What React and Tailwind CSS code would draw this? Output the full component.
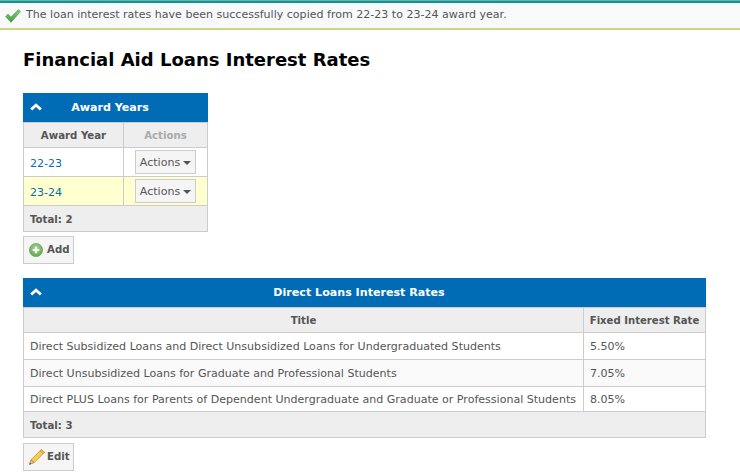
function ChevronUp() {
  return (
    <svg width="12" height="8" viewBox="0 0 12 8" className="block">
      <path d="M6 0.3 L11.8 5.4 L9.8 7.4 L6 4 L2.2 7.4 L0.2 5.4 Z" fill="#fff" />
    </svg>
  );
}

function Check() {
  return (
    <svg width="16" height="14" viewBox="0 0 16 14" className="block">
      <defs>
        <linearGradient id="cg" x1="0" y1="0" x2="0" y2="1">
          <stop offset="0%" stopColor="#8ccc7e" />
          <stop offset="100%" stopColor="#3f9a45" />
        </linearGradient>
      </defs>
      <path d="M0.5 7.5 L3 5 L6 8 L13.4 0.6 L15.6 2.6 L6 13.4 Z" fill="url(#cg)" stroke="#4c9450" strokeWidth="0.5" />
    </svg>
  );
}

function PlusIcon() {
  return (
    <svg width="14" height="14" viewBox="0 0 14 14" className="block">
      <defs>
        <radialGradient id="pg" cx="50%" cy="40%" r="60%">
          <stop offset="0%" stopColor="#b5dca0" />
          <stop offset="100%" stopColor="#5aa84a" />
        </radialGradient>
      </defs>
      <circle cx="7" cy="7" r="6.6" fill="url(#pg)" stroke="#6b9f62" strokeWidth="0.7" />
      <path d="M7 3.8 V10.2 M3.8 7 H10.2" stroke="#fff" strokeWidth="2" />
    </svg>
  );
}

function Pencil() {
  return (
    <svg width="16" height="16" viewBox="0 0 16 16" className="block">
      <path d="M12.4 0.5 L15.5 3.3 L5 13.6 L2 10.8 Z" fill="#f5cf55" stroke="#c88a2a" strokeWidth="0.8" />
      <path d="M12.4 0.5 L15.5 3.3 L14 4.8 L10.9 2 Z" fill="#eeb27a" stroke="#c88a2a" strokeWidth="0.6" />
      <path d="M2 10.8 L5 13.6 L0.4 15.6 Z" fill="#e8c9a0" stroke="#b5793a" strokeWidth="0.8" />
      <path d="M0.4 15.6 L1.1 13.7 L2.3 14.8 Z" fill="#5a4a3a" />
    </svg>
  );
}

function PanelHeader({ title }) {
  return (
    <div className="relative flex h-[29px] items-center justify-center bg-[#006cb5] pr-[11px] pt-[2px]">
      <span className="absolute left-[7px] top-[10px]"><ChevronUp /></span>
      <span className="text-[11.1px] font-bold text-white">{title}</span>
    </div>
  );
}

function ActionsButton() {
  return (
    <div className="flex h-[24px] w-[61px] items-center justify-center gap-[3px] border border-[#ccc] bg-[#f5f5f5] pt-[2px] text-[11.05px] text-[#555]">
      Actions
      <span className="h-0 w-0 border-x-[4px] border-t-[4px] border-x-transparent border-t-[#555]" />
    </div>
  );
}

function IconButton({ icon, label, gap }) {
  return (
    <div className={`flex h-[28px] w-[51px] items-center border border-[#ccc] bg-[#f5f5f5] pl-[5px] text-[10.2px] font-bold text-[#555] ${gap}`}>
      {icon}
      {label}
    </div>
  );
}

const loans = [
  ["Direct Subsidized Loans and Direct Unsubsidized Loans for Undergraduated Students", "5.50%", "h-[27px] bg-white"],
  ["Direct Unsubsidized Loans for Graduate and Professional Students", "7.05%", "h-[27px] bg-[#f9f9f9]"],
  ["Direct PLUS Loans for Parents of Dependent Undergraduate and Graduate or Professional Students", "8.05%", "h-[25px] bg-white"],
];

export default function App() {
  return (
    <div className="min-h-[473px] overflow-hidden bg-white font-['DejaVu_Sans','Liberation_Sans',sans-serif] text-[11.05px] text-[#555]">
      <div className="h-px bg-[#6fb98a]" />
      <div className="flex h-[29px] items-center gap-[5px] border-t-[2px] border-b-[2px] border-t-[#0f8fa8] border-b-[#c9d77e] bg-[#f7f9fb] pl-[5px] text-[#555]">
        <Check />
        <span>The loan interest rates have been successfully copied from 22-23 to 23-24 award year.</span>
      </div>

      <div className="px-[23px]">
        <h1 className="mt-[18px] h-[45px] text-[18px] font-bold leading-[24px] text-black">Financial Aid Loans Interest Rates</h1>

        <div className="w-[185px]">
          <PanelHeader title="Award Years" />
          <table className="w-full table-fixed border-collapse border border-[#ccc]">
            <tbody>
              <tr className="h-[25px] bg-[#eee] text-[10.2px] font-bold">
                <td className="w-[100px] border border-[#ccc] pt-[1px] text-center">Award Year</td>
                <td className="border border-[#ccc] pt-[1px] text-center text-[#aaa]">Actions</td>
              </tr>
              <tr className="h-[29px] bg-white">
                <td className="border border-[#ccc] pl-[6px] pt-[5px] text-[#006cb5]">22-23</td>
                <td className="border border-[#ccc]"><div className="flex justify-center"><ActionsButton /></div></td>
              </tr>
              <tr className="h-[29px] bg-[#ffffcf]">
                <td className="border border-[#ccc] pl-[6px] pt-[5px] text-[#006cb5]">23-24</td>
                <td className="border border-[#ccc]"><div className="flex justify-center"><ActionsButton /></div></td>
              </tr>
              <tr className="h-[26px] bg-[#eee] text-[10.2px] font-bold">
                <td colSpan={2} className="border border-[#ccc] pl-[6px] pt-[3px]">Total: 2</td>
              </tr>
            </tbody>
          </table>
        </div>

        <div className="mt-[4px]"><IconButton icon={<PlusIcon />} label="Add" gap="gap-[4px]" /></div>

        <div className="mt-[14px] w-[683px]">
          <PanelHeader title="Direct Loans Interest Rates" />
          <table className="w-full table-fixed border-collapse border border-[#ccc]">
            <tbody>
              <tr className="h-[25px] bg-[#eee] text-[10.2px] font-bold">
                <td className="border border-[#ccc] pt-[1px] text-center">Title</td>
                <td className="w-[122px] border border-[#ccc] pt-[1px] text-center text-[10.1px]">Fixed Interest Rate</td>
              </tr>
              {loans.map(([title, rate, cls]) => (
                <tr key={title} className={cls}>
                  <td className="border border-[#ccc] pl-[6px] pt-[3px] whitespace-nowrap">{title}</td>
                  <td className="border border-[#ccc] pl-[6px] pt-[3px]">{rate}</td>
                </tr>
              ))}
              <tr className="h-[26px] bg-[#eee] text-[10.2px] font-bold">
                <td colSpan={2} className="border border-[#ccc] pl-[6px] pt-[3px]">Total: 3</td>
              </tr>
            </tbody>
          </table>
        </div>

        <div className="mt-[5px]"><IconButton icon={<Pencil />} label="Edit" gap="gap-[2px]" /></div>
      </div>
    </div>
  );
}
